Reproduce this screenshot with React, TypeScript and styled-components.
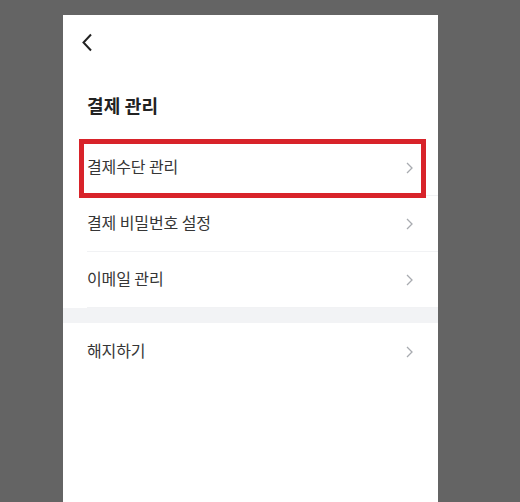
import React from "react"
import styled, { createGlobalStyle } from "styled-components"

const GlobalStyle = createGlobalStyle`
  html, body {
    margin: 0;
    padding: 0;
    background: #646464;
  }
  body {
    font-family: "Noto Sans CJK KR", "Noto Sans", sans-serif;
  }
`

const Stage = styled.div`
  display: flex;
  justify-content: flex-start;
  padding: 15px 0 0 63px;
  height: 502px;
  box-sizing: border-box;
  overflow: hidden;
`

const Panel = styled.div`
  width: 375px;
  background: #fff;
  min-height: 600px;
  display: flex;
  flex-direction: column;
`

const TopBar = styled.div`
  height: 52px;
  display: flex;
  align-items: center;
  padding-left: 18px;
`

const BackButton = styled.button`
  border: 0;
  background: none;
  padding: 0;
  display: flex;
  align-items: center;
  margin-top: 2px;
`

const Title = styled.h1`
  margin: 0;
  padding: 25px 24px 0;
  height: 73px;
  box-sizing: border-box;
  font-size: 18px;
  line-height: 26px;
  font-weight: 700;
  color: #222;
  letter-spacing: 0.2px;
`

const Menu = styled.ul`
  list-style: none;
  margin: 0;
  padding: 0;
`

const Row = styled.li<{ $highlight?: boolean; $last?: boolean }>`
  position: relative;
  height: ${(p) => (p.$last ? "58px" : "56px")};
  margin-left: 24px;
  padding-right: 25px;
  display: flex;
  align-items: center;
  justify-content: space-between;
  border-bottom: ${(p) => (p.$last ? "0" : "1px solid #f1f2f4")};
  box-sizing: border-box;
  font-size: 16px;
  color: #363636;
  letter-spacing: -0.1px;

  ${(p) =>
    p.$highlight &&
    `
    &::after {
      content: "";
      position: absolute;
      left: -8px;
      right: 12px;
      top: -1px;
      bottom: -3px;
      border: 5px solid #d8232a;
    }
  `}
`

const Label = styled.span`
  margin-bottom: 4px;
`

const Gap = styled.div`
  height: 15px;
  background: #f2f3f5;
`

const Chevron = () => (
  <svg width="7" height="12" viewBox="0 0 7 12" fill="none">
    <path d="M1 1l5 5-5 5" stroke="#a8abb0" strokeWidth="1.3" />
  </svg>
)

const BackIcon = () => (
  <svg width="12" height="19" viewBox="0 0 12 19" fill="none">
    <path d="M10 1.5L2.5 9.5l7.5 8" stroke="#222" strokeWidth="2" />
  </svg>
)

const items = ["결제수단 관리", "결제 비밀번호 설정", "이메일 관리"]

export default function App() {
  return (
    <>
      <GlobalStyle />
      <Stage>
        <Panel>
          <TopBar>
            <BackButton aria-label="뒤로">
              <BackIcon />
            </BackButton>
          </TopBar>
          <Title>결제 관리</Title>
          <Menu>
            {items.map((label, i) => (
              <Row key={label} $highlight={i === 0}>
                <Label>{label}</Label>
                <Chevron />
              </Row>
            ))}
          </Menu>
          <Gap />
          <Menu>
            <Row $last>
              <Label>해지하기</Label>
              <Chevron />
            </Row>
          </Menu>
        </Panel>
      </Stage>
    </>
  )
}
